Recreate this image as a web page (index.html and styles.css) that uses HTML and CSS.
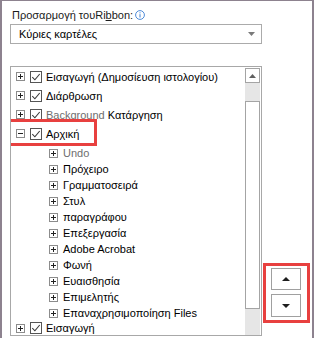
FILE: index.html
```html
<!DOCTYPE html>
<html lang="el">
<head>
    <meta charset="UTF-8">
    <meta name="viewport" content="width=device-width, initial-scale=1.0">
    <title>Προσαρμογή της Κορδέλας</title>
    <link rel="stylesheet" href="styles.css">
</head>
<body>
    <div class="window">
        <!-- Title -->
        <div class="title">Προσαρμογή του<span>Ri<u>b</u>bon:</span>
            <svg class="info" width="10" height="10" viewBox="0 0 10 10"><circle cx="5" cy="5" r="4.4" fill="none" stroke="#3b7fd4" stroke-width="0.9"/><path d="M5 4.2v3.3" stroke="#3b7fd4" stroke-width="1"/><circle cx="5" cy="2.8" r="0.6" fill="#3b7fd4"/></svg>
        </div>

        <!-- Dropdown -->
        <div class="dropdown">
            <span>Κύριες καρτέλες</span>
            <svg width="7" height="4" viewBox="0 0 7 4"><path d="M0 0h7L3.5 4z" fill="#7a7a7a"/></svg>
        </div>

        <div class="lower">
            <!-- Tab tree -->
            <div class="list">
                <div class="items">
                    <div class="row top">
                        <svg class="plus" width="9" height="9"><rect x=".5" y=".5" width="8" height="8" fill="#fff" stroke="#8c8c8c"/><path d="M2 4.5h5M4.5 2v5" stroke="#222"/></svg>
                        <svg class="check" width="12" height="12"><rect x=".5" y=".5" width="11" height="11" fill="#fff" stroke="#555"/><path d="M2.3 6.2l2.6 2.6 4.8-5.8" fill="none" stroke="#3a3a3a" stroke-width="1.1"/></svg>
                        <span>Εισαγωγή (Δημοσίευση ιστολογίου)</span>
                    </div>
                    <div class="row top">
                        <svg class="plus" width="9" height="9"><rect x=".5" y=".5" width="8" height="8" fill="#fff" stroke="#8c8c8c"/><path d="M2 4.5h5M4.5 2v5" stroke="#222"/></svg>
                        <svg class="check" width="12" height="12"><rect x=".5" y=".5" width="11" height="11" fill="#fff" stroke="#555"/><path d="M2.3 6.2l2.6 2.6 4.8-5.8" fill="none" stroke="#3a3a3a" stroke-width="1.1"/></svg>
                        <span>Διάρθρωση</span>
                    </div>
                    <div class="row top">
                        <svg class="plus" width="9" height="9"><rect x=".5" y=".5" width="8" height="8" fill="#fff" stroke="#8c8c8c"/><path d="M2 4.5h5M4.5 2v5" stroke="#222"/></svg>
                        <svg class="check" width="12" height="12"><rect x=".5" y=".5" width="11" height="11" fill="#fff" stroke="#555"/><path d="M2.3 6.2l2.6 2.6 4.8-5.8" fill="none" stroke="#3a3a3a" stroke-width="1.1"/></svg>
                        <span><span class="muted">Background</span> Κατάργηση</span>
                    </div>
                    <div class="row top selected">
                        <svg class="plus" width="9" height="9"><rect x=".5" y=".5" width="8" height="8" fill="#fff" stroke="#8c8c8c"/><path d="M2 4.5h5" stroke="#222"/></svg>
                        <svg class="check" width="12" height="12"><rect x=".5" y=".5" width="11" height="11" fill="#fff" stroke="#555"/><path d="M2.3 6.2l2.6 2.6 4.8-5.8" fill="none" stroke="#3a3a3a" stroke-width="1.1"/></svg>
                        <span>Αρχική</span>
                        <div class="highlight"></div>
                    </div>

                    <!-- Groups of Αρχική -->
                    <div class="groups" id="groups"></div>

                    <div class="row top last">
                        <svg class="plus" width="9" height="9"><rect x=".5" y=".5" width="8" height="8" fill="#fff" stroke="#8c8c8c"/><path d="M2 4.5h5M4.5 2v5" stroke="#222"/></svg>
                        <svg class="check" width="12" height="12"><rect x=".5" y=".5" width="11" height="11" fill="#fff" stroke="#555"/><path d="M2.3 6.2l2.6 2.6 4.8-5.8" fill="none" stroke="#3a3a3a" stroke-width="1.1"/></svg>
                        <span>Εισαγωγή</span>
                    </div>
                </div>

                <!-- Scrollbar -->
                <div class="scrollbar">
                    <div class="scroll-up">
                        <svg width="7" height="4" viewBox="0 0 7 4"><path d="M0 4h7L3.5 0z" fill="#606060"/></svg>
                    </div>
                    <div class="track-top"></div>
                    <div class="thumb"></div>
                    <div class="track-bottom"></div>
                </div>
            </div>

            <!-- Move up / down -->
            <div class="side">
                <div class="move-box">
                    <button class="move-btn">
                        <svg width="8" height="4" viewBox="0 0 8 4"><path d="M0 4h8L4 0z" fill="#1e1e1e"/></svg>
                    </button>
                    <button class="move-btn down">
                        <svg width="8" height="4" viewBox="0 0 8 4"><path d="M0 0h8L4 4z" fill="#1e1e1e"/></svg>
                    </button>
                </div>
            </div>
        </div>
    </div>

    <script>
        // Groups shown under the expanded Αρχική tab
        const groups = [
            { name: "Undo", muted: true },
            { name: "Πρόχειρο" },
            { name: "Γραμματοσειρά" },
            { name: "Στυλ" },
            { name: "παραγράφου" },
            { name: "Επεξεργασία" },
            { name: "Adobe Acrobat" },
            { name: "Φωνή" },
            { name: "Ευαισθησία" },
            { name: "Επιμελητής" },
            { name: "Επαναχρησιμοποίηση Files" }
        ];

        const plusIcon = '<svg class="plus" width="9" height="9"><rect x=".5" y=".5" width="8" height="8" fill="#fff" stroke="#8c8c8c"/><path d="M2 4.5h5M4.5 2v5" stroke="#222"/></svg>';

        const container = document.getElementById('groups');
        groups.forEach(group => {
            const cls = group.muted ? ' class="muted"' : '';
            container.innerHTML += `<div class="row sub">${plusIcon}<span${cls}>${group.name}</span></div>`;
        });
    </script>
</body>
</html>
```

FILE: styles.css
```css
body {
    margin: 0;
    background-color: white;
    color: black;
    font-family: "Liberation Sans", Arial, sans-serif;
    font-size: 11px;
}

.window {
    height: 338px;
    box-sizing: border-box;
    border: solid #8d828f;
    border-width: 1px 2px 0 2px;
    padding-left: 8px;
    overflow: hidden;
}

.title {
    display: flex;
    align-items: center;
    height: 16px;
    margin-top: 6px;
    padding-left: 2px;
    color: #1a1a1a;
}

.title .info {
    margin-left: 2px;
}

.dropdown {
    display: flex;
    align-items: center;
    justify-content: space-between;
    width: 252px;
    height: 20px;
    box-sizing: border-box;
    margin-top: 1px;
    padding: 0 6px 0 8px;
    border: 1px solid #ababab;
}

.lower {
    display: flex;
    margin-top: 22px;
}

/* Tree of tabs */
.list {
    display: flex;
    width: 252px;
    height: 270px;
    box-sizing: border-box;
    border: 1px solid #a8a8a8;
}

.items {
    flex: 1;
    overflow: hidden;
}

.row {
    display: flex;
    align-items: center;
    white-space: nowrap;
    position: relative;
}

.row.top {
    height: 19px;
    padding-left: 5px;
}

.row.top .check {
    margin-left: 5px;
    margin-right: 4px;
}

.row.sub {
    height: 16px;
    padding-left: 38px;
}

.row.sub .plus {
    margin-right: 5px;
}

.groups {
    padding-top: 2px;
}

.row.last {
    height: 16px;
    margin-top: -1px;
}

.muted {
    color: #6e6e6e;
}

.highlight {
    position: absolute;
    left: -3px;
    top: -5px;
    width: 89px;
    height: 27px;
    box-sizing: border-box;
    border: 3px solid #e8403f;
}

/* Scrollbar */
.scrollbar {
    display: flex;
    flex-direction: column;
    width: 16px;
    padding: 1px 1px 0 0;
    box-sizing: border-box;
}

.scroll-up {
    display: flex;
    align-items: center;
    justify-content: center;
    height: 15px;
    border: 1px solid #a4a4a4;
    box-sizing: border-box;
}

.track-top {
    height: 18px;
    background-color: #e6e6e6;
}

.thumb {
    height: 208px;
    border: 1px solid #a4a4a4;
    box-sizing: border-box;
}

.track-bottom {
    flex: 1;
    background-color: #e6e6e6;
}

/* Move up / down buttons */
.side {
    display: flex;
    align-items: flex-end;
    padding-left: 1px;
    padding-bottom: 13px;
}

.move-box {
    display: flex;
    flex-direction: column;
    gap: 4px;
    padding: 2px 6px 3px 5px;
    border: 3px solid #e8403f;
}

.move-btn {
    display: flex;
    align-items: center;
    justify-content: center;
    width: 30px;
    height: 22px;
    padding: 0;
    background-color: white;
    border: 1px solid #a0a0a0;
}

.move-btn.down {
    height: 23px;
}
```
